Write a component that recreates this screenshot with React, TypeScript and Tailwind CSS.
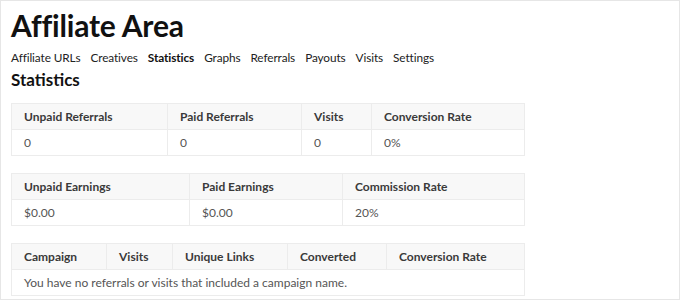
import React from 'react';

const font = { fontFamily: 'Lato, "Open Sans", sans-serif' };

const tabs = ['Affiliate URLs', 'Creatives', 'Statistics', 'Graphs', 'Referrals', 'Payouts', 'Visits', 'Settings'];

type Col = { label: string; w: string };

const StatTable = ({ cols, rows, empty }: { cols: Col[]; rows?: string[]; empty?: string }) => (
  <table className="w-[513px] table-fixed border-collapse border border-[#ececec] text-[12px]">
    <thead>
      <tr className="bg-[#f8f8f8]">
        {cols.map((c) => (
          <th key={c.label} className={`${c.w} h-[26px] border border-[#ececec] px-[12px] text-left font-bold text-[#3a3a3a]`}>
            {c.label}
          </th>
        ))}
      </tr>
    </thead>
    <tbody>
      <tr>
        {empty ? (
          <td colSpan={cols.length} className="h-[26px] border border-[#ececec] px-[12px] text-[#555]">
            {empty}
          </td>
        ) : (
          rows?.map((r, i) => (
            <td key={i} className="h-[26px] border border-[#ececec] px-[12px] text-[#555]">
              {r}
            </td>
          ))
        )}
      </tr>
    </tbody>
  </table>
);

export default function App() {
  return (
    <div style={font} className="h-[300px] w-[680px] border border-[#e6e6e6] bg-white">
      <div className="px-[10px] pt-[3px]">
        <h1 className="text-[30px] font-bold leading-[42px] tracking-[-0.2px] text-[#111]">Affiliate Area</h1>
        <div className="mt-[2px] flex gap-[10px] text-[11.8px] leading-[20px] tracking-[-0.1px] text-[#222]">
          {tabs.map((t) => (
            <span key={t} className={t === 'Statistics' ? 'font-bold text-[#111]' : ''}>
              {t}
            </span>
          ))}
        </div>
        <h2 className="text-[17px] font-bold leading-[24px] text-[#111]">Statistics</h2>

        <div className="mt-[11px] flex flex-col gap-[17px]">
          <StatTable
            cols={[
              { label: 'Unpaid Referrals', w: 'w-[156px]' },
              { label: 'Paid Referrals', w: 'w-[134px]' },
              { label: 'Visits', w: 'w-[70px]' },
              { label: 'Conversion Rate', w: 'w-[153px]' },
            ]}
            rows={['0', '0', '0', '0%']}
          />
          <StatTable
            cols={[
              { label: 'Unpaid Earnings', w: 'w-[178px]' },
              { label: 'Paid Earnings', w: 'w-[153px]' },
              { label: 'Commission Rate', w: 'w-[182px]' },
            ]}
            rows={['$0.00', '$0.00', '20%']}
          />
          <StatTable
            cols={[
              { label: 'Campaign', w: 'w-[95px]' },
              { label: 'Visits', w: 'w-[66px]' },
              { label: 'Unique Links', w: 'w-[115px]' },
              { label: 'Converted', w: 'w-[99px]' },
              { label: 'Conversion Rate', w: 'w-[138px]' },
            ]}
            empty="You have no referrals or visits that included a campaign name."
          />
        </div>
      </div>
    </div>
  );
}
